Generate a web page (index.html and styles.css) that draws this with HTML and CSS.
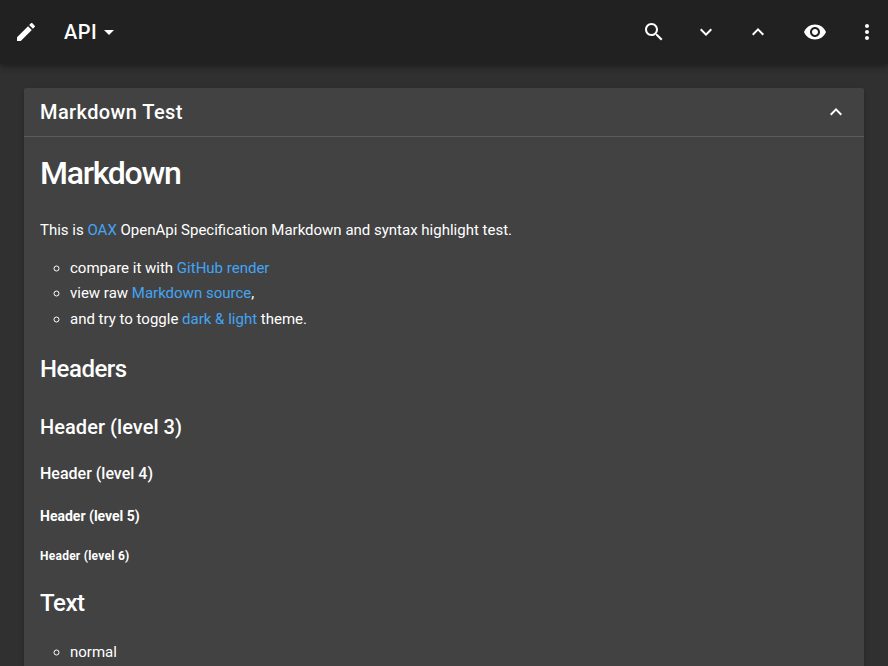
FILE: index.html
```html
<!DOCTYPE html>
<html lang="en">
<head>
<meta charset="utf-8">
<title>API</title>
<link rel="stylesheet" href="styles.css">
</head>
<body>
<header class="toolbar">
  <svg class="icon" viewBox="0 0 24 24"><path d="M3 17.25V21h3.75L17.81 9.94l-3.75-3.75L3 17.25zM20.71 7.04c.39-.39.39-1.02 0-1.41l-2.34-2.34c-.39-.39-1.02-.39-1.41 0l-1.83 1.83 3.75 3.75 1.83-1.83z"/></svg>
  <div class="api">API<svg class="icon" viewBox="0 0 24 24"><path d="M7 10l5 5 5-5z"/></svg></div>
  <nav class="actions">
    <svg class="icon" viewBox="0 0 24 24"><path d="M15.5 14h-.79l-.28-.27C15.41 12.59 16 11.11 16 9.5 16 5.91 13.09 3 9.5 3S3 5.91 3 9.5 5.91 16 9.5 16c1.61 0 3.09-.59 4.23-1.57l.27.28v.79l5 4.99L20.49 19l-4.99-5zm-6 0C7.01 14 5 11.99 5 9.5S7.01 5 9.5 5 14 7.01 14 9.5 11.99 14 9.5 14z"/></svg>
    <svg class="icon" viewBox="0 0 24 24"><path d="M16.59 8.59L12 13.17 7.41 8.59 6 10l6 6 6-6z"/></svg>
    <svg class="icon" viewBox="0 0 24 24"><path d="M12 8l-6 6 1.41 1.41L12 10.83l4.59 4.58L18 14z"/></svg>
    <svg class="icon eye" viewBox="0 0 24 24"><path d="M12 4.5C7 4.5 2.73 7.61 1 12c1.73 4.39 6 7.5 11 7.5s9.27-3.11 11-7.5c-1.73-4.39-6-7.5-11-7.5zM12 17c-2.76 0-5-2.24-5-5s2.24-5 5-5 5 2.24 5 5-2.24 5-5 5zm0-8c-1.66 0-3 1.34-3 3s1.34 3 3 3 3-1.34 3-3-1.34-3-3-3z"/></svg>
    <svg class="icon" viewBox="0 0 24 24"><path d="M12 8c1.1 0 2-.9 2-2s-.9-2-2-2-2 .9-2 2 .9 2 2 2zm0 2c-1.1 0-2 .9-2 2s.9 2 2 2 2-.9 2-2-.9-2-2-2zm0 6c-1.1 0-2 .9-2 2s.9 2 2 2 2-.9 2-2-.9-2-2-2z"/></svg>
  </nav>
</header>
<main class="card">
  <div class="card-head"><span>Markdown Test</span><svg class="icon" viewBox="0 0 24 24"><path d="M12 8l-6 6 1.41 1.41L12 10.83l4.59 4.58L18 14z"/></svg></div>
  <article class="markdown">
    <h1>Markdown</h1>
    <p>This is <a>OAX</a> OpenApi Specification Markdown and syntax highlight test.</p>
    <ul>
      <li>compare it with <a>GitHub render</a></li>
      <li>view raw <a>Markdown source</a>,</li>
      <li>and try to toggle <a>dark &amp; light</a> theme.</li>
    </ul>
    <h2>Headers</h2>
    <h3>Header (level 3)</h3>
    <h4>Header (level 4)</h4>
    <h5>Header (level 5)</h5>
    <h6>Header (level 6)</h6>
    <h2>Text</h2>
    <ul class="styles"><li>normal</li></ul>
  </article>
</main>
</body>
</html>
```
FILE: styles.css
```css
* { box-sizing: border-box; }
body { margin: 0; height: 666px; overflow: hidden; background: #303030; color: #fff; font-family: Roboto, sans-serif; }
.icon { width: 24px; height: 24px; fill: #fff; display: block; flex: none; }
.toolbar { position: relative; height: 64px; background: #212121; display: flex; align-items: center; padding: 0 9px 0 14px; box-shadow: 0 2px 4px -1px rgba(0,0,0,.2), 0 4px 5px rgba(0,0,0,.14), 0 1px 10px rgba(0,0,0,.12); }
.api { display: flex; align-items: center; margin-left: 26px; font-size: 20px; font-weight: 500; letter-spacing: .5px; }
.actions { display: flex; align-items: center; margin-left: auto; gap: 28px; }
.eye { margin-left: 5px; }
.card { margin: 24px 24px 0; background: #424242; border-radius: 2px 2px 0 0; height: 600px; box-shadow: 0 3px 1px -2px rgba(0,0,0,.2), 0 2px 2px rgba(0,0,0,.14), 0 1px 5px rgba(0,0,0,.12); }
.card-head { height: 49px; border-bottom: 1px solid #5b5b5b; padding: 0 16px; display: flex; align-items: center; justify-content: space-between; font-size: 20px; font-weight: 500; letter-spacing: .4px; }
.markdown { padding: 0 16px; font-size: 15px; line-height: 25.5px; }
h1, h2, h3, h4, h5, h6, p, ul { margin: 0; }
h1 { font-size: 32px; font-weight: 500; line-height: 40px; margin-top: 16px; letter-spacing: -1.28px; }
p { margin-top: 25px; }
ul { padding-left: 30px; list-style: circle; margin-top: 12px; }
.styles { margin-top: 21px; }
a { color: #42a5f5; }
h2 { font-size: 24px; font-weight: 500; line-height: 32px; margin-top: 21px; letter-spacing: -.48px; }
h3 { font-size: 20px; font-weight: 500; line-height: 28px; margin-top: 28px; letter-spacing: .05px; }
h4 { font-size: 16px; font-weight: 500; line-height: 24px; margin-top: 21px; }
h5 { font-size: 14px; font-weight: 700; line-height: 20px; margin-top: 20px; }
h6 { font-size: 12px; font-weight: 700; line-height: 18px; margin: 21px 0 22px; letter-spacing: .25px; }
h6 + h2 { margin-top: 0; }
```
